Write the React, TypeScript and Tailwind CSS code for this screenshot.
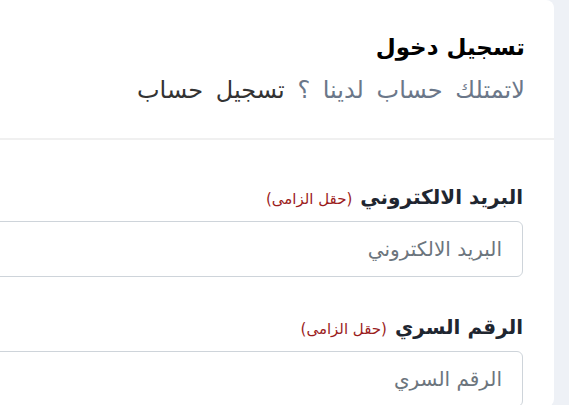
export default function App() {
  return (
    <div
      dir="rtl"
      className="flex min-h-[405px] w-full overflow-hidden bg-[#eef1f6] pr-[15px]"
      style={{ fontFamily: '"DejaVu Sans", sans-serif' }}
    >
      <div className="w-[640px] shrink-0 rounded-lg bg-white">
        <div className="border-b-2 border-[#f0f0f0] px-[29px] pt-[31px] pb-[33px]">
          <h1 className="text-[23px] font-bold leading-[32px] text-black">تسجيل دخول</h1>
          <p className="mt-[12px] text-[24px] leading-[30px] text-[#6b7789] [word-spacing:5px]">
            لاتمتلك حساب لدينا ؟ <a className="text-[#333]">تسجيل حساب</a>
          </p>
        </div>
        <form className="px-[31px] pt-[43px]">
          <div>
            <label className="flex items-baseline gap-[8px] text-[20px] font-bold leading-[28px] text-[#1f2630]">
              البريد الالكتروني
              <span className="text-[15px] font-normal text-[#9b1c1c]">(حقل الزامى)</span>
            </label>
            <input
              type="email"
              placeholder="البريد الالكتروني"
              className="mt-[8px] h-[56px] w-full rounded-md border border-[#ced4da] bg-white px-[20px] text-[20px] text-[#333] placeholder:text-[#6c757d]"
            />
          </div>
          <div className="mt-[36px]">
            <label className="flex items-baseline gap-[8px] text-[20px] font-bold leading-[28px] text-[#1f2630]">
              الرقم السري
              <span className="text-[15px] font-normal text-[#9b1c1c]">(حقل الزامى)</span>
            </label>
            <input
              type="password"
              placeholder="الرقم السري"
              className="mt-[8px] h-[56px] w-full rounded-md border border-[#ced4da] bg-white px-[20px] text-[20px] text-[#333] placeholder:text-[#6c757d]"
            />
          </div>
        </form>
      </div>
    </div>
  );
}
